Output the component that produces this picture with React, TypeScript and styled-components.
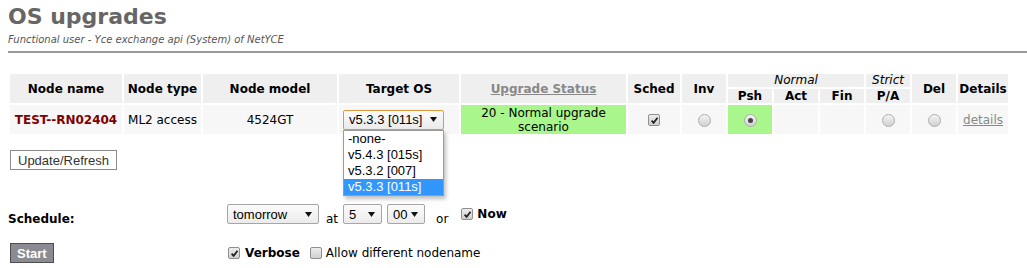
import React from 'react';
import styled, { createGlobalStyle } from 'styled-components';

const GlobalStyle = createGlobalStyle`
  * { box-sizing: border-box; }
  body {
    margin: 0;
    background: #fff;
    font-family: "DejaVu Sans", Verdana, sans-serif;
    font-size: 12px;
    color: #000;
  }
`;

const Page = styled.div`
  padding: 4px 0 0 8px;
`;

const Title = styled.h1`
  margin: 0;
  font-size: 22px;
  line-height: 26px;
  font-weight: bold;
  color: #666;
`;

const Subtitle = styled.div`
  margin-top: 4px;
  font-size: 10px;
  line-height: 12px;
  font-style: italic;
  color: #555;
`;

const Rule = styled.div`
  margin-top: 5px;
  border-top: 2px solid #9a9a9a;
`;

const NodeTable = styled.table`
  margin-top: 19px;
  border-collapse: separate;
  border-spacing: 2px;
  table-layout: fixed;
  width: 1002px;
`;

const Col = styled.col<{ $w: number }>`
  width: ${p => p.$w}px;
`;

const Th = styled.th`
  background: #efefef;
  font-weight: bold;
  font-size: 12px;
  line-height: 14px;
  height: 14px;
  padding: 0 1px;
  text-align: center;
  vertical-align: middle;
  white-space: nowrap;
`;

const GroupTh = styled(Th)`
  font-weight: normal;
  font-style: italic;
  height: 13px;
  line-height: 13px;
`;

const Td = styled.td<{ $left?: boolean; $hl?: boolean }>`
  height: 29px;
  padding: ${p => (p.$left ? '0 1px 0 4px' : '0 1px')};
  background: ${p => (p.$hl ? '#a8f68c' : '#f7f7f7')};
  text-align: ${p => (p.$left ? 'left' : 'center')};
  vertical-align: middle;
  line-height: 14px;
`;

const NodeName = styled.span`
  font-weight: bold;
  color: #800000;
`;

const GrayLink = styled.a<{ $bold?: boolean }>`
  color: #888;
  text-decoration: underline;
  font-weight: ${p => (p.$bold ? 'bold' : 'normal')};
  cursor: pointer;
`;

const SelectWrap = styled.div<{ $ml?: number }>`
  position: relative;
  display: inline-block;
  vertical-align: middle;
  margin-left: ${p => p.$ml ?? 0}px;
`;

const SelectBox = styled.div<{ $w: number; $focus?: boolean }>`
  display: flex;
  align-items: center;
  justify-content: space-between;
  width: ${p => p.$w}px;
  height: 20px;
  padding: 0 6px 0 5px;
  border: 1px solid ${p => (p.$focus ? '#e09a3e' : '#a6a6a6')};
  border-radius: 2px;
  background: linear-gradient(#fbfbfb, #ebebeb);
  font-family: "Liberation Sans", Arial, sans-serif;
  font-size: 13px;
  color: #000;
  white-space: nowrap;
`;

const OptionList = styled.ul`
  position: absolute;
  top: 100%;
  left: 0;
  right: 0;
  margin: 0;
  padding: 0;
  list-style: none;
  background: #fff;
  border: 1px solid #9a9a9a;
  box-shadow: 2px 3px 4px rgba(0, 0, 0, 0.25);
  z-index: 2;
  font-family: "Liberation Sans", Arial, sans-serif;
  font-size: 13px;
`;

const Option = styled.li<{ $selected?: boolean }>`
  height: 16px;
  line-height: 16px;
  padding-left: 4px;
  white-space: nowrap;
  background: ${p => (p.$selected ? '#3297fd' : 'transparent')};
  color: ${p => (p.$selected ? '#fff' : '#000')};
`;

const Box = styled.span<{ $ml?: number }>`
  display: inline-flex;
  align-items: center;
  justify-content: center;
  vertical-align: middle;
  width: 12px;
  height: 12px;
  margin-left: ${p => p.$ml ?? 0}px;
  border: 1px solid #8f8f8f;
  border-radius: 2px;
  background: linear-gradient(#ececec, #d0d0d0);
`;

const Radio = styled.span<{ $checked?: boolean }>`
  display: inline-flex;
  align-items: center;
  justify-content: center;
  vertical-align: middle;
  width: 13px;
  height: 13px;
  border-radius: 50%;
  border: 1px solid #adadad;
  background: linear-gradient(#f4f4f4, #d0d0d0);

  &::after {
    content: '';
    display: ${p => (p.$checked ? 'block' : 'none')};
    width: 5px;
    height: 5px;
    border-radius: 50%;
    background: #444;
  }
`;

const RefreshButton = styled.button`
  display: block;
  margin: 14px 0 0 2px;
  height: 20px;
  padding: 0 7px;
  border: 1px solid #8a8a8a;
  background: #fff;
  font-family: "Liberation Sans", Arial, sans-serif;
  font-size: 13px;
  color: #333;
`;

const ScheduleGrid = styled.div`
  display: grid;
  grid-template-columns: 219px auto;
  row-gap: 19px;
  margin-top: 34px;
`;

const FieldLabel = styled.div`
  align-self: end;
  font-weight: bold;
  line-height: 10px;
`;

const Controls = styled.div`
  display: flex;
  align-items: center;
  height: 20px;
`;

const Word = styled.span<{ $ml?: number; $low?: boolean; $bold?: boolean }>`
  margin-left: ${p => p.$ml ?? 0}px;
  font-weight: ${p => (p.$bold ? 'bold' : 'normal')};
  line-height: ${p => (p.$low ? '10px' : '14px')};
  align-self: ${p => (p.$low ? 'flex-end' : 'center')};
  white-space: nowrap;
`;

const StartButton = styled.button`
  justify-self: start;
  margin-left: 2px;
  height: 20px;
  padding: 0 6px;
  border: 1px solid #4e4e4e;
  background: #8b8b93;
  color: #fff;
  font-family: "Liberation Sans", Arial, sans-serif;
  font-size: 13px;
  font-weight: bold;
`;

const Arrow = () => (
  <svg width="7" height="5" viewBox="0 0 7 5">
    <polygon points="0,0 7,0 3.5,5" fill="#111" />
  </svg>
);

const CheckMark = () => (
  <svg width="9" height="9" viewBox="0 0 10 10">
    <path d="M1.8 5.2 L4 7.6 L8.4 2" stroke="#222" strokeWidth="2" fill="none" />
  </svg>
);

const Check: React.FC<{ checked?: boolean; ml?: number }> = ({ checked, ml }) => (
  <Box $ml={ml}>{checked && <CheckMark />}</Box>
);

const Select: React.FC<{ value: string; width: number; ml?: number; focus?: boolean; options?: string[] }> = ({
  value,
  width,
  ml,
  focus,
  options,
}) => (
  <SelectWrap $ml={ml}>
    <SelectBox $w={width} $focus={focus}>
      <span>{value}</span>
      <Arrow />
    </SelectBox>
    {options && (
      <OptionList>
        {options.map(o => (
          <Option key={o} $selected={o === value}>
            {o}
          </Option>
        ))}
      </OptionList>
    )}
  </SelectWrap>
);

const widths = [112, 77, 134, 120, 165, 52, 44, 44, 44, 44, 44, 44, 50];

const App: React.FC = () => {
  return (
    <Page>
      <GlobalStyle />
      <Title>OS upgrades</Title>
      <Subtitle>Functional user - Yce exchange api (System) of NetYCE</Subtitle>
      <Rule />

      <NodeTable>
        <colgroup>
          {widths.map((w, i) => (
            <Col key={i} $w={w} />
          ))}
        </colgroup>
        <thead>
          <tr>
            <Th rowSpan={2}>Node name</Th>
            <Th rowSpan={2}>Node type</Th>
            <Th rowSpan={2}>Node model</Th>
            <Th rowSpan={2}>Target OS</Th>
            <Th rowSpan={2}>
              <GrayLink $bold>Upgrade Status</GrayLink>
            </Th>
            <Th rowSpan={2}>Sched</Th>
            <Th rowSpan={2}>Inv</Th>
            <GroupTh colSpan={3}>Normal</GroupTh>
            <GroupTh>Strict</GroupTh>
            <Th rowSpan={2}>Del</Th>
            <Th rowSpan={2}>Details</Th>
          </tr>
          <tr>
            <Th>Psh</Th>
            <Th>Act</Th>
            <Th>Fin</Th>
            <Th>P/A</Th>
          </tr>
        </thead>
        <tbody>
          <tr>
            <Td>
              <NodeName>TEST--RN02404</NodeName>
            </Td>
            <Td>ML2 access</Td>
            <Td>4524GT</Td>
            <Td $left>
              <Select
                value="v5.3.3 [011s]"
                width={101}
                focus
                options={['-none-', 'v5.4.3 [015s]', 'v5.3.2 [007]', 'v5.3.3 [011s]']}
              />
            </Td>
            <Td $hl>20 - Normal upgrade scenario</Td>
            <Td>
              <Check checked />
            </Td>
            <Td>
              <Radio />
            </Td>
            <Td $hl>
              <Radio $checked />
            </Td>
            <Td />
            <Td />
            <Td>
              <Radio />
            </Td>
            <Td>
              <Radio />
            </Td>
            <Td>
              <GrayLink>details</GrayLink>
            </Td>
          </tr>
        </tbody>
      </NodeTable>

      <RefreshButton>Update/Refresh</RefreshButton>

      <ScheduleGrid>
        <FieldLabel>Schedule:</FieldLabel>
        <Controls>
          <Select value="tomorrow" width={92} />
          <Word $ml={7} $low>at</Word>
          <Select value="5" width={39} ml={5} />
          <Select value="00" width={38} ml={5} />
          <Word $ml={11} $low>or</Word>
          <Check checked ml={13} />
          <Word $ml={4} $bold>Now</Word>
        </Controls>

        <StartButton>Start</StartButton>
        <Controls>
          <Check checked ml={1} />
          <Word $ml={5} $bold>Verbose</Word>
          <Check ml={10} />
          <Word $ml={4}>Allow different nodename</Word>
        </Controls>
      </ScheduleGrid>
    </Page>
  );
};

export default App;
